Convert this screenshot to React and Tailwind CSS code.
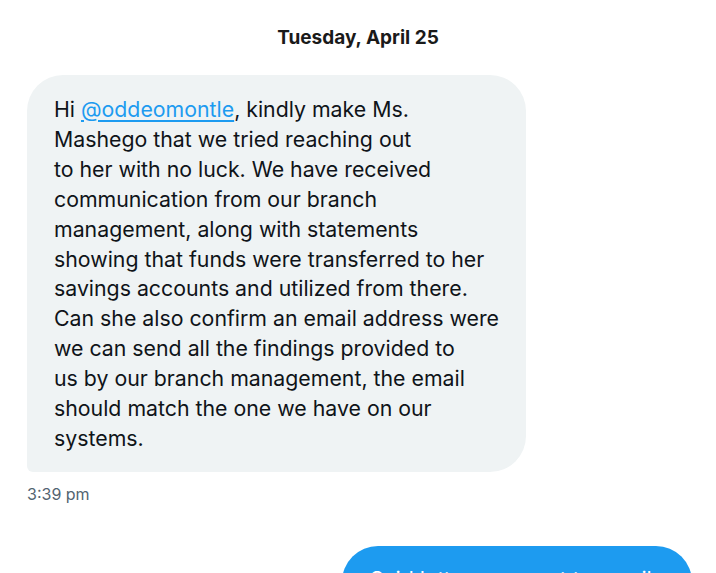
export default function App() {
  const lines = [
    "Mashego that we tried reaching out",
    "to her with no luck. We have received",
    "communication from our branch",
    "management, along with statements",
    "showing that funds were transferred to her",
    "savings accounts and utilized from there.",
    "Can she also confirm an email address were",
    "we can send all the findings provided to",
    "us by our branch management, the email",
    "should match the one we have on our",
    "systems.",
  ];
  return (
    <div
      className="w-[716px] h-[573px] overflow-hidden bg-white flex flex-col"
      style={{ fontFamily: "Inter, Roboto, 'Liberation Sans', sans-serif" }}
    >
      <div className="shrink-0 pt-[26px] h-[75px] text-center text-[19px] leading-[24px] font-bold text-[#1a1a1a]">
        Tuesday, April 25
      </div>
      <div className="shrink-0 pl-[27px]">
        <div className="w-[499px] bg-[#eff3f4] rounded-tl-[36px] rounded-tr-[36px] rounded-br-[36px] rounded-bl-[6px] pl-[27px] pt-[20px] pb-[18px] text-[21.3px] leading-[29.9px] text-[#0f1419]">
          <div className="whitespace-nowrap">
            Hi <span className="text-[#1d9bf0] underline underline-offset-[3px]">@oddeomontle</span>, kindly make Ms.
          </div>
          {lines.map((l, i) => (
            <div key={i} className="whitespace-nowrap">{l}</div>
          ))}
        </div>
        <div className="mt-[12px] text-[16px] leading-[20px] text-[#536471]">3:39 pm</div>
      </div>
      <div className="shrink-0 flex justify-end pr-[24px] mt-[42px]">
        <div className="w-[350px] bg-[#1d9bf0] rounded-tl-[36px] rounded-tr-[36px] pl-[28px] pt-[18px] pb-[18px] text-[21.3px] leading-[30px] text-white whitespace-nowrap">
          Said letter was sent to email
        </div>
      </div>
    </div>
  );
}
